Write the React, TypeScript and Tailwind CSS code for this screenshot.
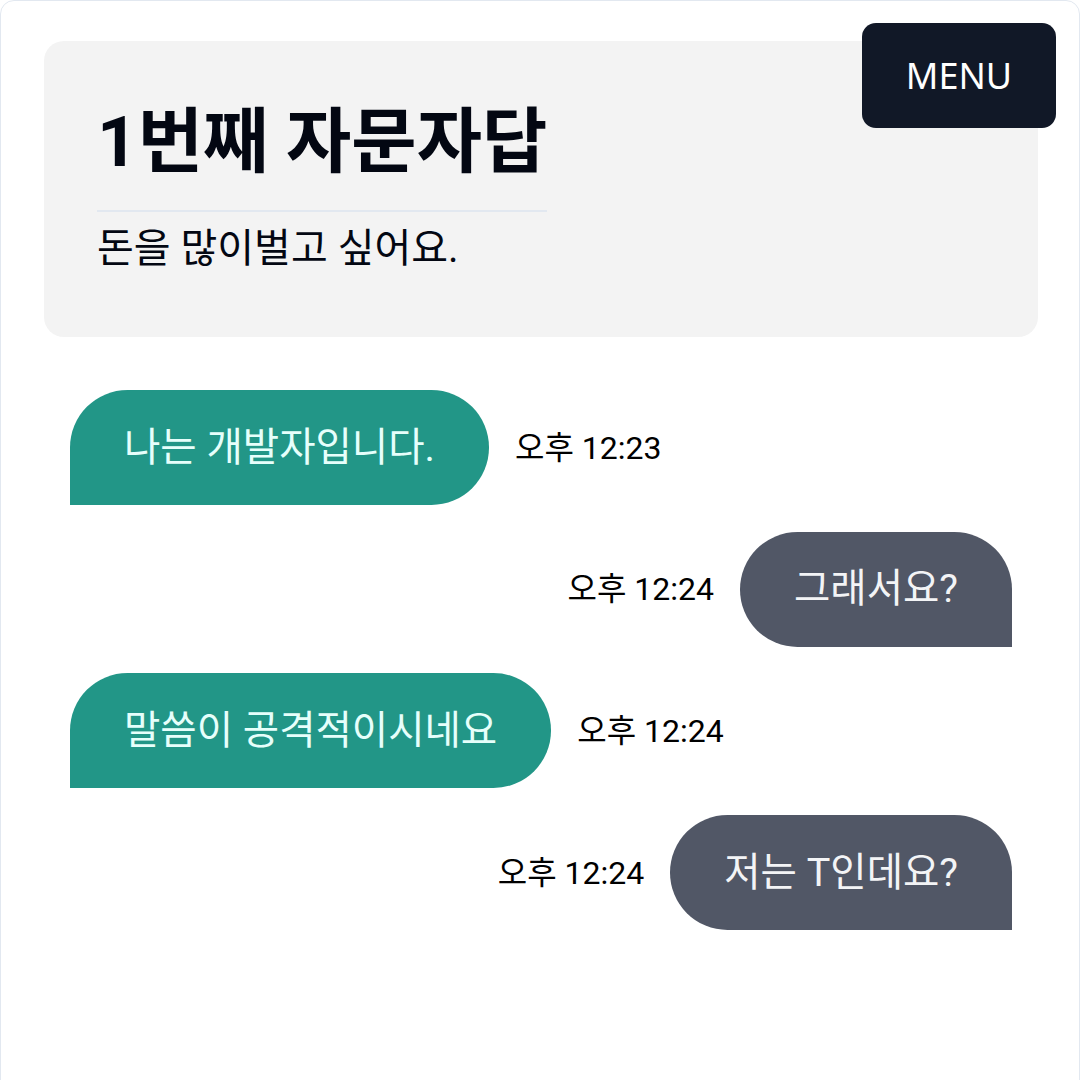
const MESSAGES = [
  { id: 1, mine: false, text: "나는 개발자입니다.", time: "오후 12:23" },
  { id: 2, mine: true, text: "그래서요?", time: "오후 12:24" },
  { id: 3, mine: false, text: "말씀이 공격적이시네요", time: "오후 12:24" },
  { id: 4, mine: true, text: "저는 T인데요?", time: "오후 12:24" },
]

const FONT = "font-['Roboto','Noto_Sans_CJK_KR',sans-serif]"

function Bubble({ mine, text, time }: { mine: boolean; text: string; time: string }) {
  const stamp = <span className="text-[32px] text-black leading-none">{time}</span>

  return (
    <div className={`flex items-center gap-[26px] ${mine ? "justify-end" : "justify-start"}`}>
      {mine && stamp}
      <div
        className={`h-[115px] px-[54px] flex items-center text-[39.5px] leading-none ${
          mine
            ? "bg-[#515766] text-[#f3f4f6] rounded-t-[58px] rounded-bl-[58px]"
            : "bg-[#229687] text-[#e6fffb] rounded-t-[58px] rounded-br-[58px]"
        }`}
      >
        {text}
      </div>
      {!mine && stamp}
    </div>
  )
}

export default function App() {
  return (
    <div className={`w-[1080px] h-[1080px] bg-white overflow-hidden ${FONT}`}>
      <div className="relative h-[1120px] border border-[#e2e8f0] rounded-t-[14px]">
        {/* Menu button */}
        <button
          type="button"
          className="absolute top-[22px] right-[23px] w-[194px] h-[105px] rounded-[14px] bg-[#111827] text-white text-[36px] font-['Noto_Sans',sans-serif] z-10"
        >
          MENU
        </button>

        {/* Header */}
        <div className="mt-[40px] ml-[43px] mr-[41px] h-[296px] rounded-[20px] bg-[#f3f3f3] px-[53px] pt-[58px]">
          <h1 className="inline-block border-b-2 border-[#e2e8f0] pb-[26px] text-[71px] font-bold leading-[1.2] text-[#030712]">
            1번째 자문자답
          </h1>
          <p className="mt-[11px] text-[40px] leading-[1.3] text-[#030712]">돈을 많이벌고 싶어요.</p>
        </div>

        {/* Chat */}
        <div className="mt-[53px] pl-[69px] pr-[67px] flex flex-col gap-[26.7px]">
          {MESSAGES.map((m) => (
            <Bubble key={m.id} mine={m.mine} text={m.text} time={m.time} />
          ))}
        </div>
      </div>
    </div>
  )
}
